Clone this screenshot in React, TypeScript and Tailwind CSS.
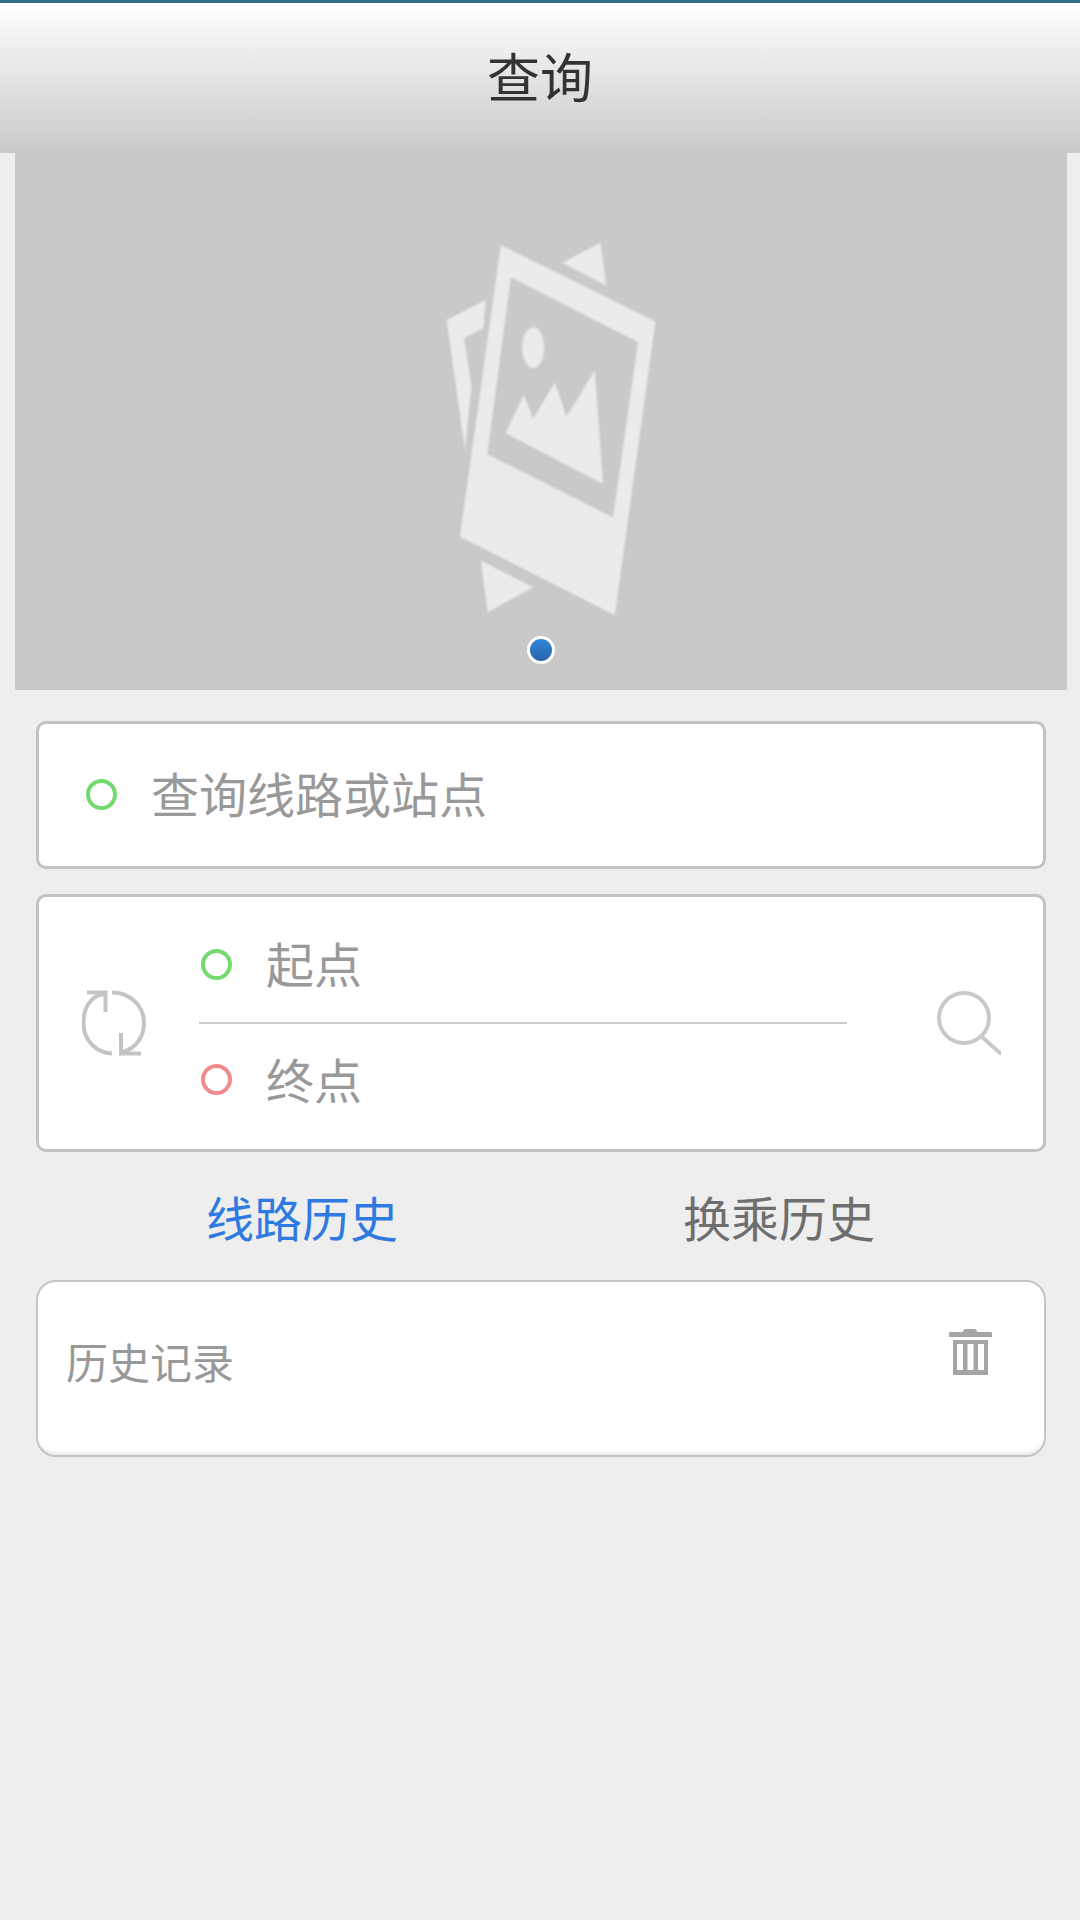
import React from 'react'

const font = "font-['Noto_Sans_CJK_SC','Noto_Sans',sans-serif]"

function Ring({ color }: { color: string }) {
  return <span className={`block w-[31px] h-[31px] rounded-full border-[4px] shrink-0 ${color}`} />
}

function Placeholder() {
  return (
    <svg viewBox="130 60 650 1135" className="w-[217px] h-[378px] ml-[21px] blur-[1px]" fill="#ebebeb">
      <path fillRule="evenodd" d="M303 75 L767 305 L645 1187 L180 950 Z M333 172 L262 703 L640 893 L715 367 Z" />
      <polygon points="317,640 372,525 400,597 465,487 500,590 585,452 610,793" />
      <ellipse cx="400" cy="383" rx="33" ry="62" />
      <polygon points="140,300 258,240 250,325 193,355 215,500 195,690" />
      <polygon points="488,128 602,68 620,197" />
      <polygon points="243,1022 400,1103 263,1178" />
    </svg>
  )
}

function SwapIcon() {
  return (
    <svg viewBox="0 0 64 66" className="w-[64px] h-[66px] shrink-0" fill="none" stroke="#c4c4c4" strokeWidth="4">
      <path d="M22 4 C8 6 1.500 18 1.500 33 C1.500 50 14 63 30 63.500" />
      <path d="M30 2.500 C48 2.500 62 16 62 33 C62 47 54 58 41 62" />
      <path d="M5 2.500 H23.500 V22" />
      <path d="M39 43 V63.500 H59" />
    </svg>
  )
}

function SearchIcon() {
  return (
    <svg viewBox="0 0 64 64" className="w-[64px] h-[64px] shrink-0" fill="none" stroke="#c9c9c9" strokeWidth="4" strokeLinecap="round">
      <circle cx="27" cy="27" r="25" />
      <path d="M45 46 L63 62" />
    </svg>
  )
}

function TrashIcon() {
  return (
    <svg viewBox="0 0 43 46" className="w-[43px] h-[46px]" fill="#a3a5a6">
      <path d="M17 0 H25 Q28 0 28 3 H42 Q43 3 43 5 V8 H0 V5 Q0 3 1 3 H14 Q14 0 17 0 Z" />
      <path fillRule="evenodd" d="M4 11 H39 V46 H4 Z M8 15 V41 H14 V15 Z M18.500 15 V41 H24.500 V15 Z M29 15 V41 H35 V15 Z" />
    </svg>
  )
}

export default function App() {
  return (
    <div className={`${font} w-[1080px] h-[1920px] bg-[#eeeeee] flex flex-col overflow-hidden`}>
      <div className="h-[3px] bg-[#2f6b84]" />
      <div className="h-[150px] flex items-center justify-center pb-[5px] bg-gradient-to-b from-[#ffffff] to-[#c9c9c9]">
        <h1 className="text-[53px] leading-none font-normal text-[#333333]">查询</h1>
      </div>

      <div className="mx-[15px] w-[1052px] h-[537px] bg-[#c9c9c9] relative pt-[87px] flex justify-center items-start shrink-0">
        <Placeholder />
        <span className="absolute left-[512px] top-[483px] w-[28px] h-[28px] rounded-full border-[3px] border-white bg-gradient-to-b from-[#2f86d8] to-[#2a62a8]" />
      </div>

      <div className="ml-[36px] w-[1010px] mt-[31px] flex flex-col">
        <div className="h-[148px] bg-white border-[3px] border-[#c2c2c2] rounded-[10px] flex items-center pl-[47px] pb-[2px] gap-[34px]">
          <Ring color="border-[#74d96f]" />
          <span className="text-[48px] leading-none text-[#999999] mb-[4px]">查询线路或站点</span>
        </div>

        <div className="h-[258px] mt-[25px] bg-white border-[3px] border-[#c2c2c2] rounded-[10px] flex items-center pl-[43px] pr-[42px]">
          <SwapIcon />
          <div className="w-[648px] ml-[53px] flex flex-col shrink-0">
            <div className="h-[114px] flex items-center pl-[2px] gap-[34px] pb-[2px]">
              <Ring color="border-[#74d96f]" />
              <span className="text-[48px] leading-none text-[#999999] mb-[4px]">起点</span>
            </div>
            <div className="h-[2px] bg-[#cccccc]" />
            <div className="h-[114px] flex items-center pl-[2px] gap-[34px] pb-[4px]">
              <Ring color="border-[#ef8a8f]" />
              <span className="text-[48px] leading-none text-[#999999] mb-[2px]">终点</span>
            </div>
          </div>
          <div className="flex-1 flex justify-end">
            <SearchIcon />
          </div>
        </div>

        <div className="h-[128px] flex items-center justify-between pl-[170px] pr-[171px] text-[48px] leading-none">
          <span className="text-[#2f7ae0]">线路历史</span>
          <span className="text-[#6e6e6e]">换乘历史</span>
        </div>

        <div className="h-[177px] bg-white border-2 border-[#c4c4c4] rounded-[20px] shadow-[inset_0_-7px_4px_-5px_#e4e4e4] flex items-start justify-between pl-[28px] pr-[52px]">
          <span className="text-[42px] leading-none text-[#999999] mt-[58px]">历史记录</span>
          <span className="mt-[47px]">
            <TrashIcon />
          </span>
        </div>
      </div>
    </div>
  )
}
